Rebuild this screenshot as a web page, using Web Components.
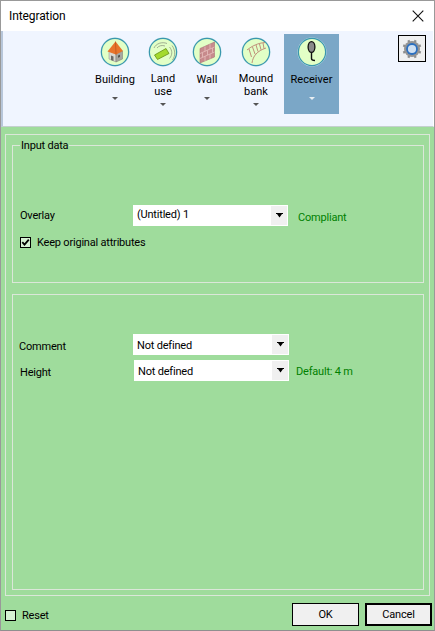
<!DOCTYPE html>
<html><head><meta charset="utf-8"><title>Integration</title>
<style>
html,body{margin:0;padding:0;background:#9fdc9c}
body{font:11px Roboto,"Liberation Sans",sans-serif;letter-spacing:-.2px;color:#000}
</style></head><body>
<app-dialog>
  <title-bar slot="title">Integration</title-bar>
  <tool-bar slot="tools">
    <tool-button icon="building" w="42">Building</tool-button>
    <tool-button icon="land" w="46" two style="margin-left:4px">Land<br>use</tool-button>
    <tool-button icon="wall" w="42">Wall</tool-button>
    <tool-button icon="mound" w="56" two>Mound<br>bank</tool-button>
    <tool-button icon="receiver" w="55" active>Receiver</tool-button>
    <gear-button slot="end"></gear-button>
  </tool-bar>
  <outer-panel slot="main">
    <group-box legend="Input data" h="145" pt="52">
      <form-row label="Overlay" value="(Untitled) 1" note="Compliant" nx="10" lx="7" ny="4"></form-row>
      <check-box checked style="margin:11px 0 0 7px">Keep original attributes</check-box>
    </group-box>
    <group-box h="296" pt="39" style="margin-top:11px">
      <form-row label="Comment" value="Not defined" lx="6" ly="4" cw="156" ty="2"></form-row>
      <form-row label="Height" value="Not defined" note="Default: 4 m" nx="7" lx="7" ly="4" cx="1" cw="155" ty="2" ny="1" style="margin-top:5px"></form-row>
    </group-box>
  </outer-panel>
  <dialog-footer slot="footer">
    <check-box flat>Reset</check-box>
    <push-button slot="end">OK</push-button>
    <push-button slot="end" default>Cancel</push-button>
  </dialog-footer>
</app-dialog>
<script>
function shadow(el, html){ el.attachShadow({mode:'open'}).innerHTML = html; return el.shadowRoot; }

customElements.define('app-dialog', class extends HTMLElement{
  constructor(){super();shadow(this,`<style>
    :host{display:flex;flex-direction:column;box-sizing:border-box;width:435px;height:631px;border:1px solid #999;border-bottom-color:#8f8f8f;background:#9fdc9c;overflow:hidden}
  </style><slot name="title"></slot><slot name="tools"></slot><slot name="main"></slot><slot name="footer"></slot>`);}
});

customElements.define('title-bar', class extends HTMLElement{
  constructor(){super();shadow(this,`<style>
    :host{display:flex;align-items:center;justify-content:space-between;box-sizing:border-box;height:30px;background:#fff;padding:0 8px 1px 8px;font-size:12px;letter-spacing:-.1px}
    svg{display:block;margin-right:2px}
  </style><span><slot></slot></span>
  <svg width="12" height="12" viewBox="0 0 12 12"><path d="M.7.7 11.3 11.3M11.3.7.7 11.3" stroke="#111" stroke-width="1.1" fill="none"/></svg>`);}
});

customElements.define('tool-bar', class extends HTMLElement{
  constructor(){super();shadow(this,`<style>
    :host{display:flex;align-items:flex-start;box-sizing:border-box;height:96px;background:#f0f5ff;border-left:2px solid #b7c6da;border-right:1px solid #fff;border-bottom:1px solid #c4d0cf;padding:3px 7px 0 91px;letter-spacing:.05px}
    .end{margin-left:auto;display:flex;padding-top:1px}
  </style><slot></slot><div class="end"><slot name="end"></slot></div>`);}
});

const ICONS = {
  building:`<path d="M9 14 16 16.5V25L9 22Z" fill="#d9d9d2" stroke="#8a8a84" stroke-width=".5"/>
    <path d="M16 16.5 22.5 14V22L16 25Z" fill="#a6a6a0" stroke="#77776f" stroke-width=".5"/>
    <path d="M11 18.5 13.5 19.5V24L11 23Z" fill="#6a6a66"/><path d="M18 18.5 20 17.7V20L18 20.8Z" fill="#55554f"/>
    <path d="M15.5 4.5 7.5 14.5 16 17.5 23 14Z" fill="#e8742a"/><path d="M15.5 4.5 16 17.5" stroke="#b9521a" stroke-width=".7"/>`,
  land:`<g fill="none" stroke="#8f9b84" stroke-width=".8"><path d="M6 11C8 6.5 14 4.5 19 6.5"/><path d="M9 11C11 8.5 14 8 17 9"/><path d="M21.5 10C24.5 13.5 24.5 18 21.5 21.5"/><path d="M24 8.5C27.5 13 27.5 19 24.5 23"/></g>
    <path d="M6.5 18 18 11.5 21 16.5 9.5 22.5Z" fill="#a4da2c" stroke="#638f12" stroke-width=".8"/>`,
  wall:`<path d="M8 11.5 22.5 5V20L8 26Z" fill="#c78a8c" stroke="#a87275" stroke-width=".6"/>
    <g stroke="#e3b9b8" stroke-width=".9" fill="none"><path d="M8 16.5 22.5 10M8 21.5 22.5 15"/><path d="M13 9.5V14.3M18 7.2V12M10.5 15.5V20M15.5 13.2V18M20.5 11V15.8M13 19V24M18 16.8V21.7"/></g>`,
  mound:`<g fill="none" stroke="#bb8270" stroke-width=".9"><path d="M6 13C11 9 17 6 24 5.5"/><path d="M11 26C12 19 16 14 25 11"/>
    <path d="M8 12 10.5 20M11.5 10 14 17M15 8 17 14.5M18.5 7 20 12.8M22 6 23 11.5"/></g>`,
  receiver:`<ellipse cx="14.5" cy="10" rx="3.4" ry="5.4" fill="#8a8a8a" stroke="#111" stroke-width="1.3"/>
    <path d="M14.5 15.5V21.5C14.5 23 16 23.5 18 23.5" fill="none" stroke="#111" stroke-width="1.4"/>`
};

customElements.define('tool-button', class extends HTMLElement{
  constructor(){super();
    const a=this.hasAttribute('active'), two=this.hasAttribute('two');
    shadow(this,`<style>
    :host{display:flex;flex-direction:column;align-items:center;box-sizing:border-box;height:80px;width:${this.getAttribute('w')}px;padding-top:3px;${a?'background:#7ba7c7;':''}color:#000;text-align:center;line-height:13px}
    svg{display:block;flex:none}
    .l{margin-top:${two?5:6}px;white-space:nowrap}
    .a{width:0;height:0;border:3px solid transparent;border-bottom:0;border-top:3px solid ${a?'#e8eef2':'#555'};margin-top:${two?5:11}px}
    </style>
    <svg width="30" height="30" viewBox="0 0 30 30"><circle cx="15" cy="15" r="14.5" fill="#bfe3e6"/><circle cx="15" cy="15" r="13.6" fill="#e2ffc6" stroke="#3a97ae" stroke-width="1.2"/>${ICONS[this.getAttribute('icon')]}</svg>
    <div class="l"><slot></slot></div><div class="a"></div>`);}
});

customElements.define('gear-button', class extends HTMLElement{
  constructor(){super();
    let teeth='';for(let i=0;i<8;i++)teeth+=`<rect x="12.9" y="4.5" width="2.2" height="3" fill="#8b8b8b" transform="rotate(${i*45+22.5} 14 14)"/>`;
    shadow(this,`<style>
    :host{display:block;box-sizing:border-box;width:28px;height:27px;border:1px solid #000;background:#eff0f1}
    svg{display:block;margin:-1px 0 0 -1px}
    </style><svg width="28" height="28" viewBox="0 0 28 28">${teeth}<circle cx="14" cy="14" r="8" fill="#949494"/><circle cx="14" cy="14" r="5.9" fill="#2a6fc0"/><circle cx="14" cy="14" r="4.1" fill="#cfe0f2"/></svg>`);}
});

customElements.define('outer-panel', class extends HTMLElement{
  constructor(){super();shadow(this,`<style>
    :host{display:block;box-sizing:border-box;height:462px;margin:7px 4px 0 4px;border:1px solid #dbe7d9;padding:3px 5px 0 6px}
  </style><slot></slot>`);}
});

customElements.define('group-box', class extends HTMLElement{
  constructor(){super();
    const l=this.getAttribute('legend');
    shadow(this,`<style>
    :host{display:block;box-sizing:border-box;height:${this.getAttribute('h')}px}
    fieldset{box-sizing:border-box;height:100%;margin:0;min-width:0;border:1px solid #dbe7d9;padding:${this.getAttribute('pt')}px 0 0 0}
    legend{padding:0 1px;margin-left:7px;line-height:15px;height:15px;color:#000}
    </style><fieldset>${l?`<legend>${l}</legend>`:''}<slot></slot></fieldset>`);}
});

customElements.define('form-row', class extends HTMLElement{
  constructor(){super();
    const g=n=>this.getAttribute(n);
    const lx=+g('lx')||0, cx=+g('cx')||0, cw=+g('cw')||155, ly=+g('ly')||0;
    shadow(this,`<style>
    :host{display:flex;align-items:center;height:21px}
    .l{box-sizing:border-box;width:120px;padding-left:${lx}px;padding-top:${ly}px;flex:none;color:#000}
    .n{color:#008000;margin-left:${+g('nx')||0}px;padding-top:${+g('ny')||0}px}
    combo-box{margin-left:${cx}px;width:${cw}px}
    </style><div class="l">${g('label')}</div><combo-box style="--ty:${+g('ty')||0}px">${g('value')}</combo-box>${g('note')?`<div class="n">${g('note')}</div>`:''}`);}
});

customElements.define('combo-box', class extends HTMLElement{
  constructor(){super();shadow(this,`<style>
    :host{display:flex;box-sizing:border-box;height:21px;background:#fff;padding:1px;flex:none;color:#000}
    .t{flex:1;padding-left:3px;padding-top:var(--ty,0px);line-height:18px;white-space:nowrap;box-sizing:border-box;height:19px}
    .b{width:16px;height:19px;background:#f0f0f0;display:flex;align-items:center;justify-content:center}
    svg{display:block}
    </style><div class="t"><slot></slot></div><div class="b"><svg width="7" height="5" viewBox="0 0 7 5"><path d="M0 0H7V1H6L3.5 4.5 1 1H0Z" fill="#000"/></svg></div>`);}
});

customElements.define('check-box', class extends HTMLElement{
  constructor(){super();
    const c=this.hasAttribute('checked');
    shadow(this,`<style>
    :host{display:flex;align-items:center;height:11px;color:#000}
    .b{box-sizing:border-box;width:11px;height:11px;border:1px solid #000;background:#d6f1d4;flex:none;margin-right:6px}
    svg{display:block}
    </style><div class="b">${c?'<svg width="9" height="9" viewBox="0 0 9 9"><path d="M1.3 4.2 3.5 6.6 7.8 1.6" fill="none" stroke="#000" stroke-width="1.8"/></svg>':''}</div><span><slot></slot></span>`);}
});

customElements.define('dialog-footer', class extends HTMLElement{
  constructor(){super();shadow(this,`<style>
    :host{display:flex;align-items:flex-start;margin-top:7px;padding:0 2px 0 4px}
    .s{padding-top:7px}
    .e{margin-left:auto;display:flex;gap:6px}
    </style><div class="s"><slot></slot></div><div class="e"><slot name="end"></slot></div>`);}
});

customElements.define('push-button', class extends HTMLElement{
  constructor(){super();const d=this.hasAttribute('default');shadow(this,`<style>
    :host{display:flex;align-items:center;justify-content:center;box-sizing:border-box;width:67px;height:23px;background:#f0f0f0;border:${d?2:1}px solid #000;color:#000}
    </style><slot></slot>`);}
});
</script>
</body></html>
